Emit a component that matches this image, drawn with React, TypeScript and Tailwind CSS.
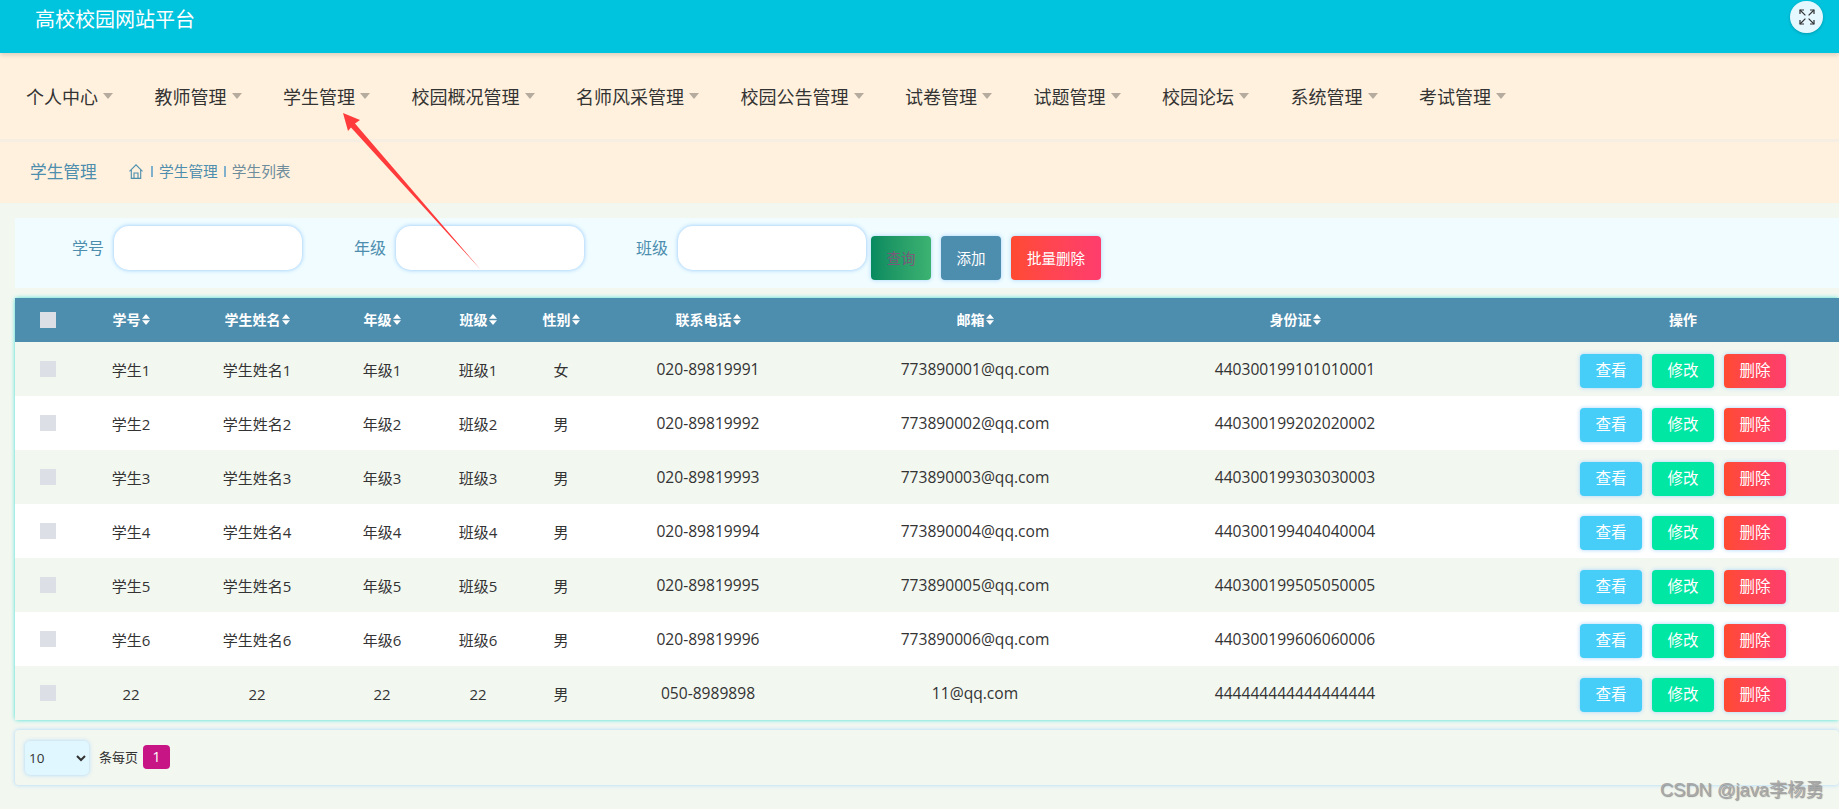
type Student = {
  no: string;
  name: string;
  grade: string;
  cls: string;
  sex: string;
  phone: string;
  email: string;
  idCard: string;
};

const menus = [
  "个人中心",
  "教师管理",
  "学生管理",
  "校园概况管理",
  "名师风采管理",
  "校园公告管理",
  "试卷管理",
  "试题管理",
  "校园论坛",
  "系统管理",
  "考试管理",
];

const students: Student[] = [
  { no: "学生1", name: "学生姓名1", grade: "年级1", cls: "班级1", sex: "女", phone: "020-89819991", email: "773890001@qq.com", idCard: "440300199101010001" },
  { no: "学生2", name: "学生姓名2", grade: "年级2", cls: "班级2", sex: "男", phone: "020-89819992", email: "773890002@qq.com", idCard: "440300199202020002" },
  { no: "学生3", name: "学生姓名3", grade: "年级3", cls: "班级3", sex: "男", phone: "020-89819993", email: "773890003@qq.com", idCard: "440300199303030003" },
  { no: "学生4", name: "学生姓名4", grade: "年级4", cls: "班级4", sex: "男", phone: "020-89819994", email: "773890004@qq.com", idCard: "440300199404040004" },
  { no: "学生5", name: "学生姓名5", grade: "年级5", cls: "班级5", sex: "男", phone: "020-89819995", email: "773890005@qq.com", idCard: "440300199505050005" },
  { no: "学生6", name: "学生姓名6", grade: "年级6", cls: "班级6", sex: "男", phone: "020-89819996", email: "773890006@qq.com", idCard: "440300199606060006" },
  { no: "22", name: "22", grade: "22", cls: "22", sex: "男", phone: "050-8989898", email: "11@qq.com", idCard: "444444444444444444" },
];

const headers = ["学号", "学生姓名", "年级", "班级", "性别", "联系电话", "邮箱", "身份证"];

function SortCaret() {
  return (
    <svg width="8" height="11" viewBox="0 0 8 11" className="ml-px shrink-0" fill="#fff">
      <path d="M4 0 8 4.7H0z" />
      <path d="M4 11 8 6.3H0z" />
    </svg>
  );
}

function HomeIcon() {
  return (
    <svg width="14" height="15" viewBox="0 0 14 15" fill="none" stroke="#4d8dae" strokeWidth="1.1">
      <path d="M.5 7.4 7 .9l6.5 6.5" />
      <path d="M2.3 6v8.4h9.4V6" />
      <path d="M5 14.4V9h4v5.4" />
    </svg>
  );
}

function ExpandIcon() {
  return (
    <svg width="16" height="16" viewBox="0 0 16 16" fill="none" stroke="#333" strokeWidth="1.2">
      <path d="M1 1l5.4 5.4M15 1 9.6 6.4M1 15l5.4-5.4M15 15 9.6 9.6" />
      <path d="M1 5V1h4M11 1h4v4M1 11v4h4M15 11v4h-4" />
    </svg>
  );
}

function SearchField({ label }: { label: string }) {
  return (
    <div className="flex w-[282px] shrink-0 items-center">
      <label className="w-[84px] text-right text-[16px] text-[#4d8dae]">{label}</label>
      <input className="ml-[10px] h-[44px] w-[188px] rounded-[15px] bg-white shadow-[0_0_4px_#8cc4fa] outline-none" />
    </div>
  );
}

export default function App() {
  return (
    <div className="relative h-[809px] w-full overflow-hidden bg-[#f2f7f0] font-['Open_Sans','Noto_Sans_CJK_SC',sans-serif] text-[#333]">
      <header className="relative z-10 flex h-[53px] items-start justify-between bg-[#00c3dd] pl-[35px] pr-[16px] shadow-[0_2px_5px_rgba(0,0,0,0.15)]">
        <h1 className="mt-[5px] text-[20px] leading-[30px] font-normal text-white">高校校园网站平台</h1>
        <button className="mt-px flex h-[32px] w-[33px] items-center justify-center rounded-full bg-[#e5f7ff] shadow-[0_1px_3px_rgba(0,0,0,0.2)]">
          <ExpandIcon />
        </button>
      </header>

      <nav className="flex h-[89px] items-center gap-[40.5px] border-b-[3px] border-[#f6eee2] bg-[#fff1dd] pl-[26px] pt-[2px]">
        {menus.map((menu) => (
          <div key={menu} className="flex items-center">
            <span className="text-[18px] leading-[24px] text-[#333]">{menu}</span>
            <span className="ml-[5px] mb-[3px] mr-[1px] h-0 w-0 border-x-[5px] border-t-[6px] border-x-transparent border-t-[#b5ab9f]" />
          </div>
        ))}
      </nav>

      <div className="flex h-[61px] items-center bg-[#fff1dd] pb-[2px] pl-[30px] text-[#4d8dae]">
        <span className="w-[99px] text-[16.7px]">学生管理</span>
        <HomeIcon />
        <span className="ml-[8px] h-[11px] w-[2px] bg-[#7fb0cc]" />
        <span className="ml-[6px] text-[14.7px]">学生管理</span>
        <span className="ml-[6px] h-[11px] w-[2px] bg-[#7fb0cc]" />
        <span className="ml-[6px] text-[14.7px] text-[#6d8c9c]">学生列表</span>
      </div>

      <section className="ml-[15px] mt-[15px] flex h-[70px] items-start bg-[#f0fcff] pl-[5px] pt-[8px]">
        <SearchField label="学号" />
        <SearchField label="年级" />
        <SearchField label="班级" />
        <div className="ml-[5px] mt-[10px] flex gap-[10px] text-[14.5px]">
          <button className="h-[44px] w-[60px] rounded-[4px] bg-gradient-to-r from-[#068a5f] to-[#3cb371] pt-[2px] text-[#7a5a7a] shadow-[0_0_4px_#a9d5fb]">查询</button>
          <button className="h-[44px] w-[60px] rounded-[4px] bg-[#4d8dae] pt-[2px] text-white shadow-[0_0_4px_#a9d5fb]">添加</button>
          <button className="h-[44px] w-[90px] rounded-[4px] bg-gradient-to-r from-[#ff4a31] to-[#ff3d6d] pt-[2px] text-white shadow-[0_0_4px_#a9d5fb]">批量删除</button>
        </div>
      </section>

      <section className="ml-[15px] mt-[10px] rounded-[3px] shadow-[0_0_4px_#3fe0d5]">
        <div className="overflow-hidden">
          <table className="w-[1892px] table-fixed border-collapse text-center text-[15px]">
            <colgroup>
              <col className="w-[66px]" />
              <col className="w-[100px]" />
              <col className="w-[152px]" />
              <col className="w-[98px]" />
              <col className="w-[94px]" />
              <col className="w-[72px]" />
              <col className="w-[222px]" />
              <col className="w-[312px]" />
              <col className="w-[328px]" />
              <col className="w-[448px]" />
            </colgroup>
            <thead>
              <tr className="h-[44px] bg-[#4d8dae] text-[14px] font-bold text-white">
                <th className="p-0">
                  <input type="checkbox" className="mx-auto block h-4 w-4 appearance-none bg-[#dcdfe6]" />
                </th>
                {headers.map((h) => (
                  <th key={h} className="p-0 pb-[2px]">
                    <span className="inline-flex items-center justify-center">
                      {h}
                      <SortCaret />
                    </span>
                  </th>
                ))}
                <th className="p-0 pb-[2px]">操作</th>
              </tr>
            </thead>
            <tbody>
              {students.map((s, i) => (
                <tr key={s.no} className={i % 2 === 0 ? "h-[54px] bg-[#f2f7f0]" : "h-[54px] bg-white"}>
                  <td className="p-0">
                    <input type="checkbox" className="mx-auto block h-4 w-4 appearance-none bg-[#dcdfe6]" />
                  </td>
                  <td className="p-0 pt-[2px]">{s.no}</td>
                  <td className="p-0 pt-[2px]">{s.name}</td>
                  <td className="p-0 pt-[2px]">{s.grade}</td>
                  <td className="p-0 pt-[2px]">{s.cls}</td>
                  <td className="p-0 pt-[2px]">{s.sex}</td>
                  <td className="p-0 pt-[1px] text-[15.6px]">{s.phone}</td>
                  <td className="p-0 pt-[1px] text-[15.6px]">{s.email}</td>
                  <td className="p-0 pt-[1px] text-[15.6px]">{s.idCard}</td>
                  <td className="p-0 pt-[4px]">
                    <div className="flex justify-center gap-[10px] text-[15.5px] text-white">
                      <button className="h-[34px] w-[62px] rounded-[4px] bg-[#46cef8] shadow-[0_0_4px_#a9d5fb]">查看</button>
                      <button className="h-[34px] w-[62px] rounded-[4px] bg-[#00e6a3] shadow-[0_0_4px_#a9d5fb]">修改</button>
                      <button className="h-[34px] w-[62px] rounded-[4px] bg-gradient-to-r from-[#ff4a31] to-[#ff3d6d] shadow-[0_0_4px_#a9d5fb]">删除</button>
                    </div>
                  </td>
                </tr>
              ))}
            </tbody>
          </table>
        </div>
      </section>

      <section className="ml-[15px] mt-[10px] flex h-[55px] items-center rounded-[4px] bg-[#f2f7f0] pl-[10px] shadow-[0_0_4px_#a9d5fb]">
        <select className="h-[34px] w-[64px] rounded-[5px] bg-[#e0f7ff] text-[13.5px] shadow-[0_0_4px_#a9d5fb] outline-none">
          <option>10</option>
        </select>
        <span className="ml-[10px] text-[13px]">条每页</span>
        <button className="ml-[5px] mb-[2px] h-[24px] w-[27px] rounded-[4px] bg-[#c71585] text-[14px] text-white">1</button>
      </section>

      {/* annotation drawn on top of the page */}
      <svg className="pointer-events-none absolute left-0 top-0 z-20" width="500" height="280">
        <polygon points="343,113 360,120 355,123.5 481,270 351,127.5 348,131" fill="#ff3b3b" />
      </svg>
      <div className="pointer-events-none absolute left-[1660px] top-[778px] z-20 whitespace-nowrap font-['Liberation_Sans','Noto_Sans_CJK_SC',sans-serif] text-[18.3px] leading-[24px] text-[#a8a8a8] [text-shadow:1px_1px_1px_rgba(80,80,80,0.6)]">
        CSDN @java李杨勇
      </div>
    </div>
  );
}
